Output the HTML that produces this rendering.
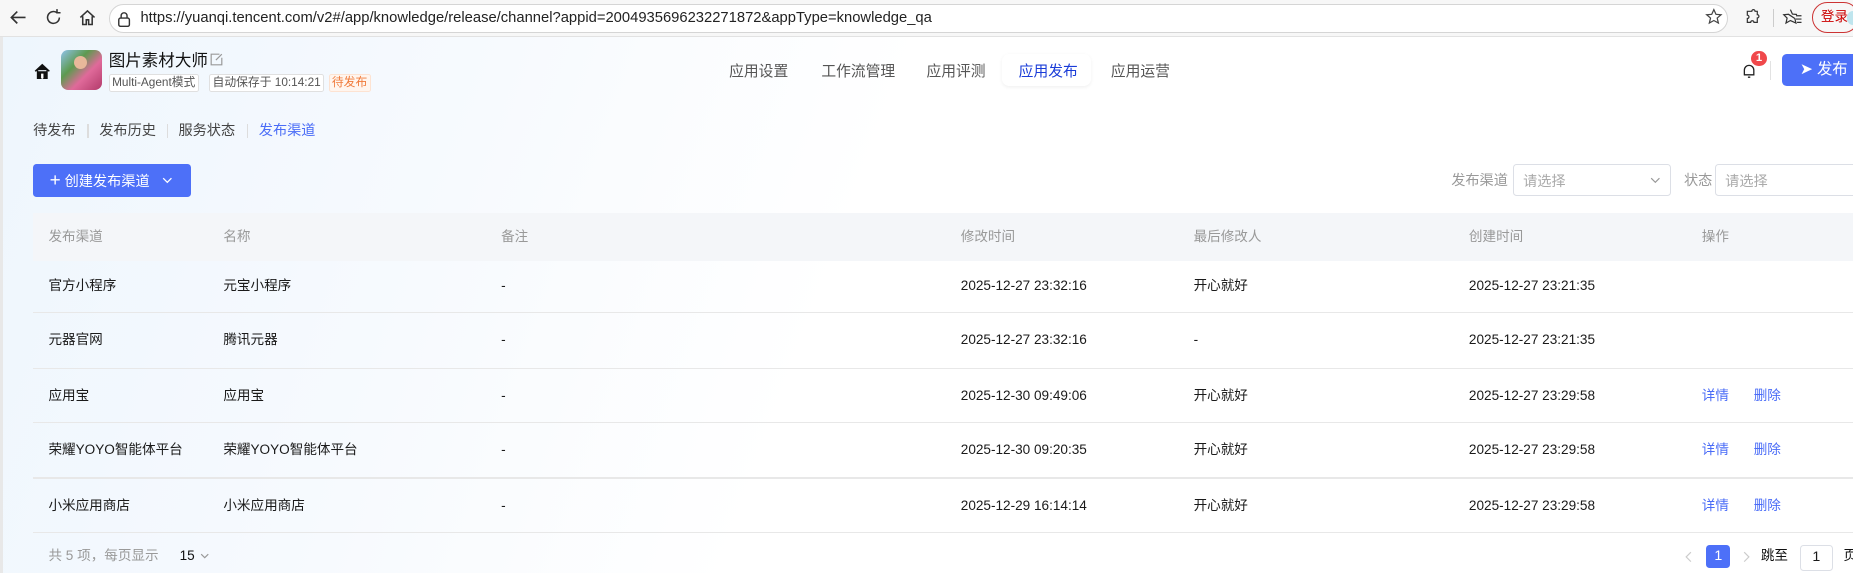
<!DOCTYPE html>
<html><head><meta charset="utf-8">
<style>
html{zoom:1.18176}
*{box-sizing:border-box;margin:0;padding:0}
body{width:1568px;height:485px;overflow:hidden;background:#fff;font-family:"Liberation Sans","Noto Sans CJK SC",sans-serif;font-size:12px;line-height:14px;color:#1a1a1a;position:relative}
.abs{position:absolute}
.bar{left:0;top:0;width:1568px;height:31px;background:#f7f7f7;border-bottom:1px solid #e2e2e2}
.url{left:92px;top:3px;width:1370px;height:25px;border:1px solid #d5d5d5;border-radius:13px;background:#fff;font-size:12.5px;color:#222;line-height:23px;padding-left:26px}
.page{left:0;top:31px;width:1568px;height:454px;background:linear-gradient(110deg,#eef6fd 0%,#f7fafe 25%,#fff 45%);border-left:3px solid #e8e8e8}
.tab{top:54px;font-size:12.5px;line-height:15px;color:#555}
.sub{top:104px;font-size:12px;line-height:15px;color:#444}
.sep{top:105px;width:1px;height:12px;background:#ddd}
.tag{top:63px;height:15px;border:1px solid #e0e0e0;border-radius:2px;font-size:10px;line-height:13px;padding:0 2px;color:#555;background:#fff}
.th{top:180px;left:28px;width:1540px;height:41px;background:#f4f6f9}
.c{position:absolute;font-size:11.5px;line-height:14px}
.h{color:#999}
.line{position:absolute;left:28px;width:1540px;height:1px;background:#e8e8e8}
.lnk{color:#4a6cf7}
.sel{top:139px;height:27px;border:1px solid #dcdfe6;border-radius:3px;background:#fff;color:#aaa;font-size:12px;line-height:14px;padding:7px 0 0 8px}
</style></head><body>
<div class="abs bar"></div>
<svg class="abs" style="left:8px;top:7px" width="16" height="16" viewBox="0 0 16 16"><path d="M14 8H2M7 3L2 8l5 5" fill="none" stroke="#333" stroke-width="1.4"/></svg>
<svg class="abs" style="left:37px;top:7px" width="16" height="16" viewBox="0 0 16 16"><path d="M13 8a5 5 0 1 1-2-4M11 1v3h3" fill="none" stroke="#333" stroke-width="1.3"/></svg>
<svg class="abs" style="left:66px;top:7px" width="16" height="16" viewBox="0 0 16 16"><path d="M2 8L8 2.5 14 8M4 7v7h3v-4h2v4h3V7" fill="none" stroke="#333" stroke-width="1.3"/></svg>
<div class="abs url">https://yuanqi.tencent.com/v2#/app/knowledge/release/channel?appid=2004935696232271872&amp;appType=knowledge_qa</div>
<svg class="abs" style="left:99px;top:9px" width="12" height="14" viewBox="0 0 12 14"><rect x="1.5" y="6" width="9" height="7" rx="1.5" fill="none" stroke="#333" stroke-width="1.2"/><path d="M3.5 6V4a2.5 2.5 0 0 1 5 0v2" fill="none" stroke="#333" stroke-width="1.2"/></svg>
<svg class="abs" style="left:1443px;top:7px" width="15" height="15" viewBox="0 0 16 16"><path d="M8 1.5l1.9 4.2 4.6.4-3.5 3 1.1 4.5L8 11.3 3.9 13.6 5 9.1 1.5 6.1l4.6-.4z" fill="none" stroke="#444" stroke-width="1.1"/></svg>
<svg class="abs" style="left:1476px;top:7px" width="15" height="15" viewBox="0 0 16 16"><path d="M5 3h2a1.5 1.5 0 0 1 3 0h2v3a1.5 1.5 0 0 1 0 3v4H9a1.5 1.5 0 0 0-3 0H3V9.5a1.5 1.5 0 0 0 0-3V3z" fill="none" stroke="#333" stroke-width="1.1"/></svg>
<div class="abs" style="left:1500px;top:8px;width:1px;height:15px;background:#ccc"></div>
<svg class="abs" style="left:1508px;top:7px" width="18" height="15" viewBox="0 0 18 16"><path d="M7 1.5l1.8 4 4.2.4M11 9.5l1 4.1L7 11.3 3 13.6 4 9.1 1 6.1l4.3-.4z" fill="none" stroke="#333" stroke-width="1.1"/><path d="M12 7h5M12 10h5M13 13h4" stroke="#333" stroke-width="1.1"/></svg>
<div class="abs" style="left:1533px;top:2px;width:40px;height:26px;border:1px solid #c33;border-radius:13px;color:#c00;font-size:11.5px;line-height:24px;padding-left:7px">登录</div>
<div class="abs" style="left:1563px;top:9px;width:10px;height:12px;border-radius:50%;background:#bfe5ee"></div>

<div class="abs page"></div>
<svg class="abs" style="left:29px;top:53px" width="14" height="14" viewBox="0 0 14 14"><path d="M1 7L7 1.5 13 7M3 6v7h3V9h2v4h3V6" fill="#111" stroke="#111" stroke-width="1.2"/><rect x="6" y="9" width="2" height="4" fill="#fff"/></svg>
<div class="abs" style="left:52px;top:42px;width:34px;height:34px;border-radius:6px;background:linear-gradient(135deg,#8fc2ea 0%,#5d9a4f 35%,#e06a9a 62%,#b23a6a 100%)"></div>
<div class="abs" style="left:63px;top:47px;width:11px;height:11px;border-radius:50%;background:#e8b89a"></div>
<div class="abs" style="left:92px;top:43px;font-size:14px;line-height:17px;color:#111">图片素材大师</div>
<svg class="abs" style="left:178px;top:45px" width="11" height="11" viewBox="0 0 11 11"><path d="M8 1H1v9h9V4M5 6l5-5" fill="none" stroke="#999" stroke-width="1"/></svg>
<div class="abs tag" style="left:92px">Multi-Agent模式</div>
<div class="abs tag" style="left:177px">自动保存于 10:14:21</div>
<div class="abs tag" style="left:278px;color:#f07a3a;background:#fff5ee;border-color:#fde3d2">待发布</div>

<div class="abs tab" style="left:617px">应用设置</div>
<div class="abs tab" style="left:695px">工作流管理</div>
<div class="abs tab" style="left:784px">应用评测</div>
<div class="abs" style="left:848px;top:46px;width:75px;height:27px;background:#fff;border-radius:6px;box-shadow:0 1px 3px rgba(0,0,0,.06)"></div>
<div class="abs tab" style="left:862px;color:#1a3cd8">应用发布</div>
<div class="abs tab" style="left:940px">应用运营</div>

<svg class="abs" style="left:1474px;top:53px" width="12" height="13" viewBox="0 0 12 13"><path d="M2 10V6a4 4 0 0 1 8 0v4H1.5h9M5 12h2" fill="none" stroke="#222" stroke-width="1.1"/></svg>
<div class="abs" style="left:1482px;top:43px;width:13px;height:13px;border-radius:50%;background:#f0484b;color:#fff;font-size:9.5px;text-align:center;line-height:13px;font-weight:bold">1</div>
<div class="abs" style="left:1498px;top:52px;width:1px;height:16px;background:#e2e2e2"></div>
<div class="abs" style="left:1508px;top:46px;width:70px;height:27px;background:#4d70f8;border-radius:4px;color:#fff;font-size:13px;line-height:27px;padding-left:15px">➤ 发布</div>

<div class="abs sub" style="left:28px">待发布</div>
<div class="abs sep" style="left:74px"></div>
<div class="abs sub" style="left:84px">发布历史</div>
<div class="abs sep" style="left:141px"></div>
<div class="abs sub" style="left:151px">服务状态</div>
<div class="abs sep" style="left:209px"></div>
<div class="abs sub" style="left:219px;color:#4a6cf7">发布渠道</div>

<div class="abs" style="left:28px;top:139px;width:134px;height:28px;background:#4d70f8;border-radius:3px;color:#fff;font-size:12px;line-height:28px;padding-left:14px"><span style="font-size:16px;font-weight:300">+</span> 创建发布渠道</div>
<svg class="abs" style="left:137px;top:150px" width="9" height="6" viewBox="0 0 9 6"><path d="M1 1l3.5 3.5L8 1" fill="none" stroke="#fff" stroke-width="1.1"/></svg>

<div class="abs" style="left:1228px;top:146px;font-size:12px;color:#999">发布渠道</div>
<div class="abs sel" style="left:1280px;width:134px">请选择</div>
<svg class="abs" style="left:1396px;top:150px" width="9" height="6" viewBox="0 0 9 6"><path d="M1 1l3.5 3.5L8 1" fill="none" stroke="#999" stroke-width="1"/></svg>
<div class="abs" style="left:1425px;top:146px;font-size:12px;color:#999">状态</div>
<div class="abs sel" style="left:1451px;width:130px">请选择</div>

<div class="abs th"></div>
<div class="c h" style="left:41px;top:194px">发布渠道</div>
<div class="c h" style="left:189px;top:194px">名称</div>
<div class="c h" style="left:424px;top:194px">备注</div>
<div class="c h" style="left:813px;top:194px">修改时间</div>
<div class="c h" style="left:1010px;top:194px">最后修改人</div>
<div class="c h" style="left:1243px;top:194px">创建时间</div>
<div class="c h" style="left:1440px;top:194px">操作</div>

<div class="c" style="left:41px;top:235px">官方小程序</div><div class="c" style="left:189px;top:235px">元宝小程序</div><div class="c" style="left:424px;top:235px">-</div><div class="c" style="left:813px;top:235px">2025-12-27 23:32:16</div><div class="c" style="left:1010px;top:235px">开心就好</div><div class="c" style="left:1243px;top:235px">2025-12-27 23:21:35</div>
<div class="line" style="top:264px"></div>
<div class="c" style="left:41px;top:281px">元器官网</div><div class="c" style="left:189px;top:281px">腾讯元器</div><div class="c" style="left:424px;top:281px">-</div><div class="c" style="left:813px;top:281px">2025-12-27 23:32:16</div><div class="c" style="left:1010px;top:281px">-</div><div class="c" style="left:1243px;top:281px">2025-12-27 23:21:35</div>
<div class="line" style="top:311px"></div>
<div class="c" style="left:41px;top:328px">应用宝</div><div class="c" style="left:189px;top:328px">应用宝</div><div class="c" style="left:424px;top:328px">-</div><div class="c" style="left:813px;top:328px">2025-12-30 09:49:06</div><div class="c" style="left:1010px;top:328px">开心就好</div><div class="c" style="left:1243px;top:328px">2025-12-27 23:29:58</div><div class="c lnk" style="left:1440px;top:328px">详情</div><div class="c lnk" style="left:1484px;top:328px">删除</div>
<div class="line" style="top:357px"></div>
<div class="c" style="left:41px;top:374px">荣耀YOYO智能体平台</div><div class="c" style="left:189px;top:374px">荣耀YOYO智能体平台</div><div class="c" style="left:424px;top:374px">-</div><div class="c" style="left:813px;top:374px">2025-12-30 09:20:35</div><div class="c" style="left:1010px;top:374px">开心就好</div><div class="c" style="left:1243px;top:374px">2025-12-27 23:29:58</div><div class="c lnk" style="left:1440px;top:374px">详情</div><div class="c lnk" style="left:1484px;top:374px">删除</div>
<div class="line" style="top:404px"></div>
<div class="c" style="left:41px;top:421px">小米应用商店</div><div class="c" style="left:189px;top:421px">小米应用商店</div><div class="c" style="left:424px;top:421px">-</div><div class="c" style="left:813px;top:421px">2025-12-29 16:14:14</div><div class="c" style="left:1010px;top:421px">开心就好</div><div class="c" style="left:1243px;top:421px">2025-12-27 23:29:58</div><div class="c lnk" style="left:1440px;top:421px">详情</div><div class="c lnk" style="left:1484px;top:421px">删除</div>
<div class="line" style="top:450px"></div>

<div class="c" style="left:41px;top:464px;color:#999">共 5 项，每页显示</div>
<div class="c" style="left:152px;top:464px;color:#111">15</div>
<svg class="abs" style="left:169px;top:468px" width="8" height="5" viewBox="0 0 8 5"><path d="M1 1l3 3 3-3" fill="none" stroke="#999" stroke-width="1"/></svg>
<svg class="abs" style="left:1426px;top:466px" width="6" height="10" viewBox="0 0 6 10"><path d="M5 1L1 5l4 4" fill="none" stroke="#ccc" stroke-width="1"/></svg>
<div class="abs" style="left:1444px;top:461px;width:20px;height:20px;background:#4d70f8;border-radius:3px;color:#fff;text-align:center;line-height:20px;font-size:12px">1</div>
<svg class="abs" style="left:1475px;top:466px" width="6" height="10" viewBox="0 0 6 10"><path d="M1 1l4 4-4 4" fill="none" stroke="#ccc" stroke-width="1"/></svg>
<div class="c" style="left:1490px;top:464px;color:#111">跳至</div>
<div class="abs" style="left:1523px;top:461px;width:28px;height:22px;border:1px solid #dcdfe6;border-radius:3px;text-align:center;line-height:20px;font-size:12px">1</div>
<div class="c" style="left:1560px;top:464px;color:#111">页</div>
</body></html>
